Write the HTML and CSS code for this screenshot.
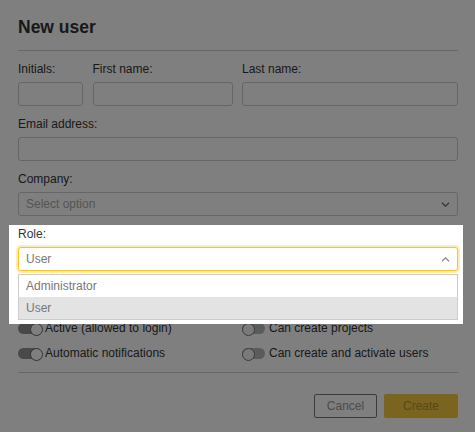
FILE: index.html
```html
<!DOCTYPE html>
<html>
    <head>
        <title>New user</title>
        <link rel="stylesheet" href="styles.css">
    </head>
    <body>
        <div class="modal">
            <h2 class="modal-title">New user</h2>
            <hr class="divider">

            <div class="name-row">
                <div class="field">
                    <label class="field-label">Initials:</label>
                    <input class="text-input" type="text">
                </div>
                <div class="field">
                    <label class="field-label">First name:</label>
                    <input class="text-input" type="text">
                </div>
                <div class="field">
                    <label class="field-label">Last name:</label>
                    <input class="text-input" type="text">
                </div>
            </div>

            <div class="field">
                <label class="field-label">Email address:</label>
                <input class="text-input" type="text">
            </div>

            <div class="field">
                <label class="field-label">Company:</label>
                <div class="select-box">
                    <span class="placeholder">Select option</span>
                    <svg class="chevron" width="9" height="5" viewBox="0 0 9 5"><path d="M1 0.8 L4.5 4.2 L8 0.8" fill="none" stroke="#666" stroke-width="1.2"/></svg>
                </div>
            </div>

            <div class="field role-field">
                <div class="spotlight"></div>
                <label class="field-label on-top">Role:</label>
                <div class="select-box is-open on-top">
                    <span>User</span>
                    <svg class="chevron" width="9" height="5" viewBox="0 0 9 5"><path d="M1 4.2 L4.5 0.8 L8 4.2" fill="none" stroke="#888" stroke-width="1.2"/></svg>
                </div>
                <ul class="dropdown">
                    <li>Administrator</li>
                    <li class="selected">User</li>
                </ul>
            </div>

            <div class="toggles">
                <div class="toggle-item"><span class="toggle on"></span>Active (allowed to login)</div>
                <div class="toggle-item"><span class="toggle"></span>Can create projects</div>
                <div class="toggle-item"><span class="toggle on"></span>Automatic notifications</div>
                <div class="toggle-item"><span class="toggle"></span>Can create and activate users</div>
            </div>

            <hr class="divider">

            <div class="actions">
                <button class="cancel-button">Cancel</button>
                <button class="create-button">Create</button>
            </div>
        </div>
    </body>
</html>
```

FILE: styles.css
```css
* {
    box-sizing: border-box;
}

html,
body {
    height: 100%;
}
body {
    margin: 0;
    background-color: white;
    color: #333;
    font-family: "Liberation Sans", Arial, sans-serif;
    font-size: 12px;
    overflow: hidden;
}

.modal {
    min-height: 100%;
    padding: 17px 17px 14px 18px;
}
.modal-title {
    margin: 0 0 13px;
    font-size: 17.5px;
    line-height: 20px;
    font-weight: bold;
}
.divider {
    margin: 0;
    border: 0;
    border-top: 1px solid #ccc;
}

.name-row {
    display: grid;
    grid-template-columns: 65px 140px 1fr;
    column-gap: 9.5px;
    margin-top: 11px;
}
.field {
    margin-bottom: 11px;
}
.field-label {
    display: block;
    line-height: 14px;
    margin-bottom: 6px;
}
.text-input {
    display: block;
    width: 100%;
    height: 24px;
    border: 1px solid #ccc;
    border-radius: 3px;
    background-color: white;
}
.select-box {
    display: flex;
    align-items: center;
    justify-content: space-between;
    height: 24px;
    padding: 0 7px;
    border: 1px solid #ccc;
    border-radius: 3px;
    background-color: white;
    color: #777;
}
.placeholder {
    color: #aaa;
}
.chevron {
    display: block;
}

/* role field is highlighted by the tour */
.role-field {
    position: relative;
    margin-bottom: 50px;
}
.spotlight {
    position: absolute;
    top: -2px;
    left: -9px;
    right: -5px;
    bottom: -53px;
    background-color: white;
    box-shadow: 0 0 0 2000px rgba(0, 0, 0, 0.5);
    z-index: 1;
}
.on-top {
    position: relative;
    z-index: 2;
}
.select-box.is-open {
    border-color: #f3c52c;
    box-shadow: 0 0 0 2px rgba(248, 214, 90, 0.45);
}
.dropdown {
    position: absolute;
    top: 47px;
    left: 0;
    right: 0;
    margin: 0;
    padding: 0;
    list-style: none;
    border: 1px solid #ccc;
    background-color: white;
    z-index: 2;
}
.dropdown li {
    height: 22px;
    line-height: 22px;
    padding-left: 7px;
    color: #777;
}
.dropdown li.selected {
    background-color: #e4e3e4;
}

.toggles {
    display: grid;
    grid-template-columns: 1fr 216px;
    row-gap: 11px;
    margin-bottom: 12px;
}
.toggle-item {
    display: flex;
    align-items: center;
    line-height: 14px;
}
.toggle {
    display: inline-block;
    position: relative;
    width: 23px;
    height: 11px;
    margin-right: 4px;
    border-radius: 6px;
    background-color: #b6b6b6;
}
.toggle::after {
    content: "";
    position: absolute;
    top: 0;
    left: 0;
    width: 11px;
    height: 11px;
    border: 1px solid #777;
    border-radius: 50%;
    background-color: #f5f5f5;
}
.toggle.on {
    background-color: #939393;
}
.toggle.on::after {
    left: 12px;
    background-color: white;
    border-color: #666;
}

.actions {
    display: flex;
    justify-content: flex-end;
    gap: 7px;
    margin-top: 21px;
}
.cancel-button {
    width: 63px;
    height: 24px;
    border: 1px solid #777;
    border-radius: 2px;
    background-color: white;
    color: #969696;
    font-family: "Liberation Sans", Arial, sans-serif;
    font-size: 12px;
}
.create-button {
    width: 74px;
    height: 24px;
    border: 0;
    border-radius: 2px;
    background-color: #f4c83e;
    color: #b3922e;
    font-family: "Liberation Sans", Arial, sans-serif;
    font-size: 12px;
}
```
